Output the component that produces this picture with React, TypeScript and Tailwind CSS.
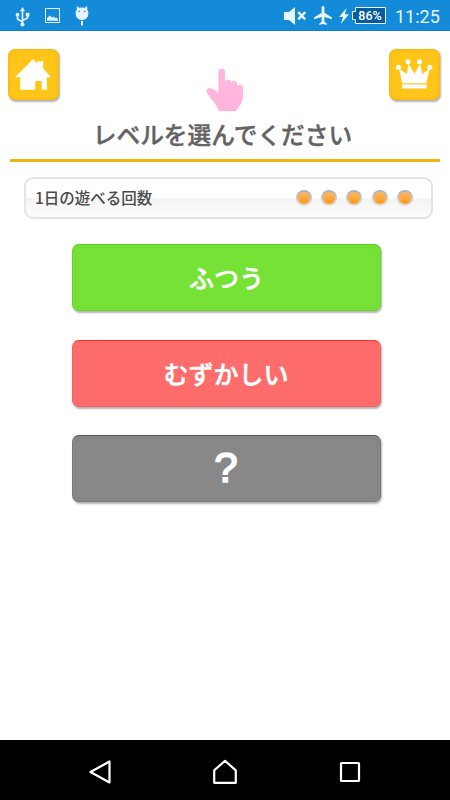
import type { ReactNode } from "react";

const levels = [
  {
    label: "ふつう",
    box: "bg-[#76e236] border-[#66d52b] border-t-[#58cd23]",
    inset: "border-[#6fdb31]",
    text: "pl-px text-[25px] font-medium [-webkit-text-stroke:0.5px_white]",
  },
  {
    label: "むずかしい",
    box: "bg-[#ff6c6c] border-[#fa6060] border-t-[#fb2f2f]",
    inset: "border-[#fd6969]",
    text: "text-[25px] font-medium [-webkit-text-stroke:0.5px_white]",
  },
  {
    label: "?",
    box: "bg-[#888888] border-[#797979] border-t-[#555555]",
    inset: "border-[#828282]",
    text: "pb-0.5 font-['Liberation_Sans',sans-serif] text-[42px] font-normal [-webkit-text-stroke:1.6px_white]",
  },
];

const playsLeft = 5;

function UsbIcon() {
  return (
    <svg width="15" height="20" viewBox="0 0 15 20" className="text-[#dff0fb]">
      <path
        d="M7.5 3V17M7.5 15L2.5 12V8M7.5 13.5L12.5 11V7"
        fill="none"
        stroke="currentColor"
        strokeWidth="1.7"
      />
      <path d="M7.5 0L10.2 4.2H4.8Z" fill="currentColor" />
      <circle cx="7.5" cy="17.5" r="2.1" fill="currentColor" />
      <circle cx="2.5" cy="7.7" r="1.9" fill="currentColor" />
      <rect x="10.8" y="5.8" width="3.6" height="3.6" fill="currentColor" />
    </svg>
  );
}

function PictureIcon() {
  return (
    <svg width="15" height="15" viewBox="0 0 15 15" className="text-[#dff0fb]">
      <rect x="0.5" y="0.5" width="14" height="14" fill="none" stroke="currentColor" />
      <path d="M2 12.8V10L4.8 7.4L7 9.6L8.5 8.4L10.2 10L11.2 9.4L13 11V12.8Z" fill="currentColor" />
    </svg>
  );
}

function DroidIcon() {
  return (
    <svg width="14" height="20" viewBox="0 0 14 20" className="text-[#e6f4fd]">
      <path
        d="M1.8 0L4 1.8Q7 1 10 1.8L12.2 0V3.5Q13.4 5 13.4 7.5Q13.2 14 7 14Q0.8 14 0.6 7.5Q0.6 5 1.8 3.5Z"
        fill="currentColor"
      />
      <path d="M6 14.8H8V19.5H6Z" fill="currentColor" />
      <circle cx="4.2" cy="5.5" r="0.8" fill="#148bd9" />
      <circle cx="9.8" cy="5.5" r="0.8" fill="#148bd9" />
    </svg>
  );
}

function MuteIcon() {
  return (
    <svg width="23" height="18" viewBox="0 0 23 18" className="text-[#e6f4fd]">
      <path d="M0 5H5L11 0V18L5 13H0Z" fill="currentColor" />
      <path d="M14.2 5.2L21.2 12.4M21.2 5.2L14.2 12.4" stroke="currentColor" strokeWidth="2.4" />
    </svg>
  );
}

function PlaneIcon() {
  return (
    <svg width="18" height="19" viewBox="0 0 18 19" className="text-[#e6f4fd]">
      <path
        d="M9 0Q10.4 0 10.4 1.6V6.8L18 11.4V13.3L10.4 11V15.7L12.7 17.4V19L9 18L5.3 19V17.4L7.6 15.7V11L0 13.3V11.4L7.6 6.8V1.6Q7.6 0 9 0Z"
        fill="currentColor"
      />
    </svg>
  );
}

function BatteryIcon() {
  return (
    <div className="relative h-[17px] w-[34px]">
      <svg width="34" height="17" viewBox="0 0 34 17" className="block">
        <path
          d="M3.5 0.5H33.5V16.5H3.5V12.5H0.5V4.5H3.5Z"
          fill="#075c9c"
          stroke="#e6f4fd"
        />
      </svg>
      <span className="absolute top-0 left-[3px] w-[30px] text-center font-[Roboto,sans-serif] text-[12.5px] leading-[17px] font-medium text-white">
        86%
      </span>
    </div>
  );
}

function StatusBar() {
  return (
    <header className="flex h-[31px] items-start border-b border-[#0f80cb] bg-[#148bd9]">
      <div className="mt-[7px] ml-[15px]">
        <UsbIcon />
      </div>
      <div className="mt-2 ml-[15px]">
        <PictureIcon />
      </div>
      <div className="mt-1.5 ml-[15px]">
        <DroidIcon />
      </div>
      <div className="mt-[7px] ml-auto">
        <MuteIcon />
      </div>
      <div className="mt-1.5 ml-[7px]">
        <PlaneIcon />
      </div>
      <svg width="10" height="16" viewBox="0 0 10 16" className="mt-2 ml-[7px]">
        <path d="M7.5 0L0 9H4L1.8 16L10 6.2H5.8Z" fill="#e6f4fd" />
      </svg>
      <div className="mt-[7px] ml-[3px]">
        <BatteryIcon />
      </div>
      <span className="mt-[3px] mr-2.5 ml-[9px] w-[45px] font-[Roboto,sans-serif] text-[18px] leading-[27px] whitespace-nowrap text-[#e8f5fd]">
        11:25
      </span>
    </header>
  );
}

function IconButton({ label, children }: { label: string; children: ReactNode }) {
  return (
    <button
      type="button"
      aria-label={label}
      className="h-[51px] w-[51px] rounded-[7px] border border-[#f9b812] bg-[#ffc518] shadow-[inset_0_0_0_2px_#fdc016,1px_1.5px_2px_rgba(0,0,0,0.3)]"
    >
      {children}
    </button>
  );
}

function HomeIcon() {
  return (
    <svg width="49" height="49" viewBox="0 0 49 49" fill="#fff">
      <path d="M24 9.3L28.4 13.5V11.2H34.2V18.6L42 27.2H37.8V39.8H32.7V31H26.2V39.8H11.2V27.2H6Z" />
    </svg>
  );
}

function CrownIcon() {
  return (
    <svg width="49" height="49" viewBox="0 0 49 49" fill="#fff">
      <path d="M9.2 18.8L17 24L18.3 13.5L24.5 23.7L30 13.5L32.3 24L39.6 18.8L36.3 33.2H12.1Z" />
      <rect x="12" y="34.4" width="24.5" height="4.1" />
      <circle cx="8.4" cy="17.2" r="2.5" />
      <circle cx="18" cy="11.8" r="2.5" />
      <circle cx="29.5" cy="11.8" r="2.5" />
      <circle cx="39.8" cy="17.2" r="2.5" />
    </svg>
  );
}

function HandIcon() {
  return (
    <svg width="38" height="44" viewBox="0 0 38 44" fill="#ffb5dc">
      <path d="M12.4 25V4.2Q12.4 0.8 15.7 0.8Q19 0.8 19 4.2V13.8Q19.4 11.5 22 11.5Q25 11.5 25.2 14.8Q26 12.7 28.3 12.8Q31.2 13 31.5 17.7Q32.2 16.7 34.2 16.8Q37 17 37 20V27Q37 33.5 33.5 38Q31.2 41 30.3 43H12.5Q11.5 38.5 8 34.5L1.2 25.5Q-0.8 22.2 1.7 20.5Q4.6 19 8.2 21.7Z" />
      <path
        d="M19.4 13.5V21.5M25.4 14.7V22.5M31.7 17.5V24"
        fill="none"
        stroke="#ffc9e6"
        strokeWidth="0.7"
      />
    </svg>
  );
}

function NavBar() {
  return (
    <nav className="flex h-[60px] items-start justify-between bg-black px-[89px]">
      <svg width="22" height="26" viewBox="0 0 22 26" fill="none" className="mt-[19px]">
        <path d="M1.5 13L20.5 2.5V23.5Z" stroke="#fff" strokeWidth="2.2" strokeLinejoin="round" />
      </svg>
      <svg width="26" height="26" viewBox="0 0 26 26" fill="none" className="mt-[19px]">
        <path
          d="M13 1.8L23.8 11.3V23.8H2.2V11.3Z"
          stroke="#fff"
          strokeWidth="2.2"
          strokeLinejoin="round"
        />
      </svg>
      <svg width="22" height="26" viewBox="0 0 22 26" fill="none" className="mt-[19px]">
        <rect x="2" y="4" width="18" height="18" rx="0.5" stroke="#fff" strokeWidth="2.2" />
      </svg>
    </nav>
  );
}

export default function App() {
  return (
    <div className="flex h-[800px] w-[450px] flex-col overflow-hidden bg-white font-['Noto_Sans_CJK_JP',sans-serif]">
      <StatusBar />

      <main className="flex-1">
        <div className="flex h-[86px] items-start justify-between pt-[18px] pr-[10px] pl-2">
          <IconButton label="ホーム">
            <HomeIcon />
          </IconButton>
          <div className="mt-[18.5px] ml-0.5">
            <HandIcon />
          </div>
          <IconButton label="ランキング">
            <CrownIcon />
          </IconButton>
        </div>

        <h1 className="mx-2.5 h-[45px] border-b-[3px] border-[#f0b50f] pr-[5px] text-center text-[23.7px] leading-[34px] font-medium whitespace-nowrap text-[#636363] [-webkit-text-stroke:0.4px_#636363]">
          レベルを選んでください
        </h1>

        <section className="mt-[15px] mr-[17px] ml-6 flex h-[41.5px] items-center justify-between rounded-[9px] border-2 border-[#e4e4e4] bg-linear-to-b from-white from-50% via-[#f3f3f3] via-50% to-[#fcfcfc] pr-[18px] pl-[9px]">
          <p className="text-[15.5px] font-medium whitespace-nowrap text-[#4a4a4a]">
            1日の遊べる回数
          </p>
          <div className="flex gap-[9.3px]">
            {Array.from({ length: playsLeft }, (_, i) => (
              <span
                key={i}
                className="flex h-4 w-4 items-center justify-center rounded-full bg-linear-to-b from-[#adadad] to-[#e2e2e2]"
              >
                <span className="mt-px h-3 w-3 rounded-full bg-linear-to-b from-[#ffba5c] to-[#ff9806]" />
              </span>
            ))}
          </div>
        </section>

        <div className="mt-[25.5px] ml-[71.5px] flex w-[309px] flex-col gap-[28.5px]">
          {levels.map((level) => (
            <button
              key={level.label}
              type="button"
              className={`h-[67px] rounded-[7px] border p-0.5 shadow-[1px_1.5px_2px_rgba(0,0,0,0.3)] ${level.box}`}
            >
              <span
                className={`flex h-full items-center justify-center rounded-[5px] border leading-none text-white ${level.inset} ${level.text}`}
              >
                {level.label}
              </span>
            </button>
          ))}
        </div>
      </main>

      <NavBar />
    </div>
  );
}
